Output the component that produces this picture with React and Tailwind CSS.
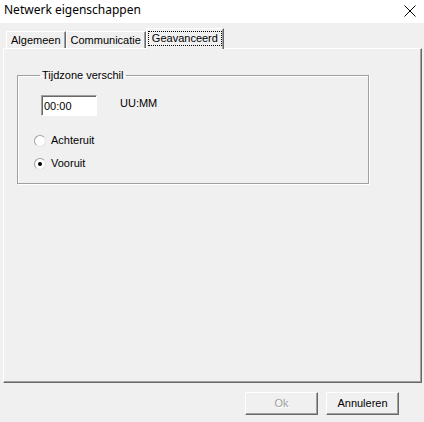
import React, { useState } from "react";

const Tab = ({ label, active, onClick }) => {
  if (active) {
    return (
      <button
        onClick={onClick}
        className="relative z-10 -mb-px h-[21px] px-[2px] bg-[#f0f0f0] border-l border-t border-white border-r border-r-[#696969] shadow-[inset_-1px_0_0_#a0a0a0]"
      >
        <span className="block px-[3px] leading-[13px] outline-1 outline-dotted outline-black -mt-[2px]">
          {label}
        </span>
      </button>
    );
  }
  return (
    <button
      onClick={onClick}
      className="h-[17px] px-[4px] leading-[14px] bg-[#f0f0f0] border-l border-t border-white border-r border-r-[#696969] shadow-[inset_-1px_0_0_#a0a0a0]"
    >
      {label}
    </button>
  );
};

const Radio = ({ label, checked, onChange }) => (
  <label className="flex items-center gap-[5px] h-[13px] cursor-default" onClick={onChange}>
    <span className="w-[12px] h-[12px] rounded-full bg-white border border-t-[#a0a0a0] border-l-[#a0a0a0] border-r-[#e3e3e3] border-b-[#e3e3e3] flex items-center justify-center">
      {checked && <span className="w-[4px] h-[4px] rounded-full bg-black" />}
    </span>
    <span>{label}</span>
  </label>
);

const Button = ({ children, disabled }) => (
  <button
    disabled={disabled}
    className={
      "w-[73px] h-[23px] bg-[#f0f0f0] border border-t-white border-l-white border-r-[#696969] border-b-[#696969] shadow-[inset_-1px_-1px_0_#a0a0a0] " +
      (disabled ? "text-[#a0a0a0] [text-shadow:1px_1px_0_#fff]" : "text-black")
    }
  >
    {children}
  </button>
);

export default function App() {
  const [tab, setTab] = useState("Geavanceerd");
  const [direction, setDirection] = useState("vooruit");
  const [offset, setOffset] = useState("00:00");

  return (
    <div className="w-[424px] h-[422px] bg-[#f0f0f0] flex flex-col text-[11px] text-black [font-family:'Liberation_Sans',Arial,sans-serif]">
      {/* title bar */}
      <div className="h-[23px] bg-white flex items-center justify-between pl-[4px] pr-[8px]">
        <span className="text-[12px] [font-family:'Noto_Sans',sans-serif] -mt-[3px]">Netwerk eigenschappen</span>
        <svg width="12" height="12" viewBox="0 0 12 12" className="-mt-[2px]">
          <path d="M0.5 0.5 L11.5 11.5 M11.5 0.5 L0.5 11.5" stroke="#000" strokeWidth="1" />
        </svg>
      </div>

      {/* tabs */}
      <div className="flex items-end pl-[6px] pt-[5px]">
        {["Algemeen", "Communicatie", "Geavanceerd"].map((t) => (
          <Tab key={t} label={t} active={tab === t} onClick={() => setTab(t)} />
        ))}
      </div>

      {/* panel */}
      <div className="ml-[3px] mr-[2px] h-[335px] border-l border-t border-white border-r border-b border-r-[#696969] border-b-[#696969] shadow-[inset_-1px_-1px_0_#a0a0a0] pl-[13px] pt-[20px]">
        <fieldset className="w-[352px] h-[115px] border border-[#a0a0a0] shadow-[inset_1px_1px_0_#fff,1px_1px_0_#fff] pl-[16px] pt-[13px]">
          <legend className="ml-[6px] px-[2px] leading-[13px]">Tijdzone verschil</legend>
          <div className="flex items-start">
            <input
              value={offset}
              onChange={(e) => setOffset(e.target.value)}
              className="ml-[7px] w-[56px] h-[21px] bg-white px-[2px] outline-none border border-t-[#a0a0a0] border-l-[#a0a0a0] border-r-white border-b-white shadow-[inset_1px_1px_0_#696969]"
            />
            <span className="ml-[23px]">UU:MM</span>
          </div>
          <div className="flex flex-col gap-[10px] mt-[18px]">
            <Radio label="Achteruit" checked={direction === "achteruit"} onChange={() => setDirection("achteruit")} />
            <Radio label="Vooruit" checked={direction === "vooruit"} onChange={() => setDirection("vooruit")} />
          </div>
        </fieldset>
      </div>

      {/* buttons */}
      <div className="flex justify-end gap-[8px] pr-[25px] pt-[9px]">
        <Button disabled>Ok</Button>
        <Button>Annuleren</Button>
      </div>
    </div>
  );
}
